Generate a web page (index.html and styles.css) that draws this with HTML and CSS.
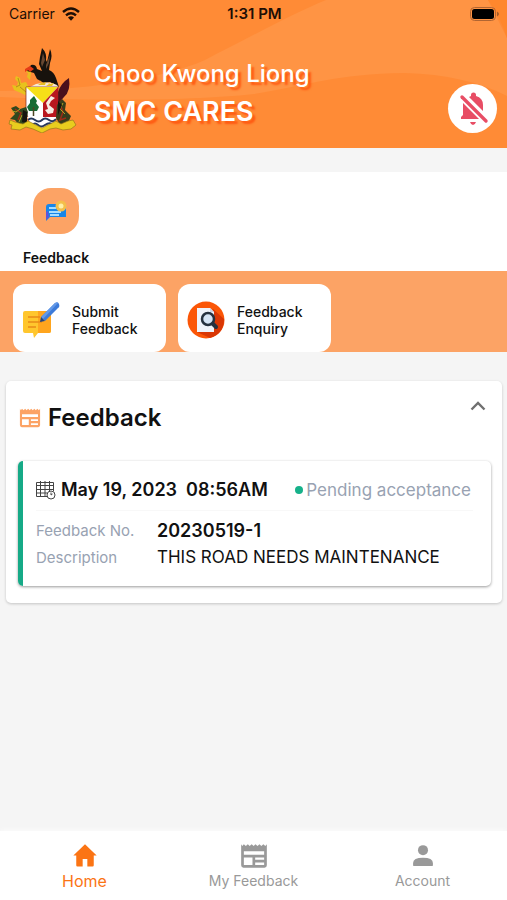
FILE: index.html
```html
<!DOCTYPE html>
<html lang="en">
<head>
<meta charset="utf-8">
<meta name="viewport" content="width=device-width, initial-scale=1">
<title>SMC Cares</title>
<link rel="stylesheet" href="styles.css">
</head>
<body>
<svg class="defs" width="0" height="0" aria-hidden="true">
  <symbol id="news" viewBox="0 0 24 24">
    <path fill="currentColor" fill-rule="evenodd" d="M1 2l1 1.500 1.300-1.500 1.700 1.500L6.700 2l1.600 1.500L10 2l1.700 1.500L13.300 2 15 3.500 16.700 2l1.600 1.500L20 2l1.700 1.500L23 2v18a2 2 0 0 1-2 2H3a2 2 0 0 1-2-2zM3.300 8v3h17.400V8zM3.300 13.300v6.400h7.400v-6.400zM13 13.300v2h7.700v-2zM13 17.600v2.100h7.700v-2.100z"/>
  </symbol>
</svg>
<header class="hero">
  <svg class="hero-art" viewBox="0 0 507 148" preserveAspectRatio="none" aria-hidden="true">
    <path fill="#ff9444" d="M326 0C290 15 250 37 205 60C160 80 80 91 0 91V97C90 101 190 101 254 94C310 85 335 74 405 73C445 74 480 82 507 96V38L488 0z"/>
    <path fill="#ff872d" d="M488 0h19v38Q500 16 488 0z"/>
  </svg>
  <div class="status">
    <span class="carrier">Carrier
      <svg width="18" height="14" viewBox="0 0 18 14" aria-hidden="true"><g fill="none" stroke="#1d0e05" stroke-width="2.400"><path d="M1 5Q9-2 17 5"/><path d="M4 8.300Q9 4 14 8.300"/></g><path fill="#1d0e05" d="M6 10.500Q9 8 12 10.500L9 13.800z"/></svg>
    </span>
    <span class="time">1:31 PM</span>
    <svg class="battery" width="30" height="14" viewBox="0 0 30 14" aria-hidden="true"><rect x=".5" y=".5" width="25" height="13" rx="4" fill="none" stroke="#b16532"/><rect x="2" y="2" width="22" height="10" rx="2.500"/><path fill="#a35b29" d="M27 4.500q4 2.500 0 5z"/></svg>
  </div>
  <div class="brand">
    <svg class="crest" width="70" height="86" viewBox="0 0 70 86" aria-hidden="true">
      <path fill="#4a101c" d="M61 31Q63 44 56 50L50 57V45Q53 36 61 31z"/>
      <path fill="#e8c21d" d="M8 29l4 2 1 5 5-1 2 4-1 10-6-3-7-3-2-5 5 1 1-4-3-3z"/>
      <path fill="none" stroke="#b78e18" d="M10 31l2 7-4 2M12 40l6 5"/>
      <path fill="#e8bd20" d="M20 22l3 3-1 8-3-3 1-4-2-1z"/>
      <path fill="#17120d" d="M23 18q5-1 6 4l5 2-3-7 1-7 2-9q5 5 4 12l1 2 3-13q3 6 0 14l-1 7q5 2 7 8l3 9-9-5-6 1-7-4-3-6-7-2z"/>
      <path fill="#684831" d="M35 6l2 7-3 7-1-4zM42 8l-1 8-3 6v-4z"/>
      <path fill="#e43b17" d="M17 22l5-3 4 3-4 3-2-2-3 2z"/>
      <path fill="#f5e9d3" d="M22 40l6-3q15-4 22 2v5l-11 1-12-2z"/>
      <path fill="#e8bd20" d="M32 33l2 3 4-1-1 3h-7l3-2zM40 35l2 2 4-1-2 3h-6l3-2z"/>
      <path fill="#fff" stroke="#7c271f" stroke-width=".7" d="M18 40h32v25q-3 13-16 16-13-3-16-16z"/>
      <path fill="#f6df18" d="M18 40h32L35 56z"/>
      <path fill="#b9171f" d="M50 40v25q-2 8-8 12l-7-3V56z"/>
      <path fill="#166b35" d="M26 49l3 5-1 2 3 4-2 4h-8l-2-4 3-4v-3z"/><path stroke="#4c4623" stroke-width="1.500" d="M25.500 60v9"/>
      <path fill="#f7eee5" d="M43 49l4 2-4 3-2 4 5 4-1 4-5 1-3-4 3-1-2-6z"/>
      <path fill="#fff" d="M19 70h30q-4 10-15 12-11-2-15-12z"/>
      <path fill="none" stroke="#25375c" stroke-width="2" d="M20 73q3-3 7 0t7 0 7 0 7-1M24 78q3-3 6 0t7 0 7-1"/>
      <path fill="#30481e" d="M3 61l5-2 4 3 6-2 2 5-2 12-7 1-4-5-5-1 5-5z"/>
      <path fill="#363d1b" d="M49 58l5-6 4 4-1 7 6 6-3 7-7 3-5-8z"/>
      <path fill="none" stroke="#9b2c18" stroke-width="1.500" d="M7 62l6 4-3 7M52 57l3 8-3 8 6-2"/>
      <path fill="none" stroke="#b5a324" d="M4 64l4 1 4-3M14 68l-3 7M55 56l-3 6 5 5"/>
      <path fill="#15150f" d="M15 63l4 2v11l-5-1zM50 54l4 4-4 10z"/>
      <path fill="#e8cd1e" stroke="#98791b" stroke-width=".7" d="M2 73l5 2 8 2 5-3 6 3 8 4 8-4 6-3 5 3 7-3 5-1 3 5-5 4-8 1-7-2-6 1-8 4-9-4-7-2-6 3-9-1 1-4-3-1z"/>
    </svg>
    <div class="who"><p>Choo Kwong Liong</p><h1>SMC CARES</h1></div>
    <button class="bell" type="button" aria-label="Notifications off">
      <svg width="32" height="36" viewBox="0 0 32 36" aria-hidden="true"><path fill="#e84d65" d="M12 6l2-1V4a2.500 2.500 0 0 1 5 0v1q7 2 7 9v6zM6 12l16 16H4v-2l2-2zM13 31h6q-1 3-3 3t-3-3z"/><path stroke="#fff" stroke-width="2" d="M7 4l23 23"/><path stroke="#e84d65" stroke-width="3.400" stroke-linecap="round" d="M5 6l24 24"/></svg>
    </button>
  </div>
</header>
<main>
  <nav class="services" aria-label="Services">
    <a class="service" href="#feedback">
      <span class="tile"><svg width="23" height="22" viewBox="0 0 23 22" aria-hidden="true"><path fill="#1786e9" d="M4 4h13q4 0 4 3v10H5L1 21V7q0-3 3-3z"/><path fill="#6254d8" d="M1 12v8l3-3-1-6z"/><path stroke="#a5ddff" stroke-width="2" d="M4 8h7M4 12h12M5 15h9"/><circle cx="16" cy="6" r="5.500" fill="#f4bf4a"/><circle cx="16" cy="6" r="2.500" fill="#fff0a8"/></svg></span>
      <span>Feedback</span>
    </a>
  </nav>
  <div class="actions">
    <a class="action" href="#submit">
      <svg width="38" height="38" viewBox="0 0 38 38" aria-hidden="true"><path fill="#ffc62d" d="M3 10h24q2 0 2 2v18q0 2-2 2H16l-4 5-1-5H3q-2 0-2-2V12q0-2 2-2z"/><path fill="#ffa51e" d="M16 10h11q2 0 2 2v18q0 2-2 2H16z"/><path stroke="#e98a17" stroke-width="1.500" d="M6 16h12M6 21h14M6 26h8"/><path fill="#3d7bd9" d="M19 16L33 2q3-2 4 1t-1 4L23 20z"/><path fill="#6399e8" d="M19 16L33 2q2-1 3 0L21 18z"/><path fill="#24457f" d="M19 16l4 4-5 1z"/></svg>
      <span>Submit<br>Feedback</span>
    </a>
    <a class="action" href="#enquiry">
      <svg width="38" height="38" viewBox="0 0 38 38" aria-hidden="true"><circle cx="19" cy="19" r="18.500" fill="#fb5607"/><path fill="#d93705" d="M26 8l11 10q0 15-14 19L10 31z"/><path fill="#eef3fa" d="M10 7h13l4 4v20H10z"/><path fill="#cbd5e3" d="M23 7v4h4z"/><circle cx="21" cy="18" r="6" fill="#d4e4f5" stroke="#24313f" stroke-width="2.500"/><path stroke="#24313f" stroke-width="4" stroke-linecap="round" d="M26 23l3 3"/></svg>
      <span>Feedback<br>Enquiry</span>
    </a>
  </div>
  <section class="panel" id="feedback">
    <div class="panel-head">
      <svg class="orange" width="22" height="22" aria-hidden="true"><use href="#news"/></svg>
      <h2>Feedback</h2>
      <button class="collapse" type="button" aria-label="Collapse feedback"><svg width="16" height="10" viewBox="0 0 16 10" aria-hidden="true"><path fill="none" stroke="#707070" stroke-width="2.400" d="M1.500 8.500L8 2l6.500 6.500"/></svg></button>
    </div>
    <article class="ticket">
      <div class="ticket-head">
        <svg width="20" height="20" viewBox="0 0 20 20" aria-hidden="true"><path fill="none" stroke="#444" d="M.5 2.500h17V11M.5 2.500v14H11M.5 5.500h17M.5 9.500h17M.5 13H11M4.500 1v15.500M9 1v15.500M13.500 1v10"/><circle cx="15" cy="15" r="4" fill="#fff" stroke="#444"/><path fill="none" stroke="#444" d="M15 12.500V15l1.500-1"/></svg>
        <time datetime="2023-05-19T08:56">May 19, 2023&nbsp; 08:56AM</time>
        <span class="state">Pending acceptance</span>
      </div>
      <dl>
        <dt>Feedback No.</dt><dd class="strong">20230519-1</dd>
        <dt>Description</dt><dd>THIS ROAD NEEDS MAINTENANCE</dd>
      </dl>
    </article>
  </section>
</main>
<nav class="tabs" aria-label="Main">
  <a class="tab active" href="#home"><svg width="28" height="28" viewBox="0 0 24 24" aria-hidden="true"><path fill="currentColor" d="M12 2L2 11.500h2.500V20q0 1 1 1H10v-6.500h4V21h4.500q1 0 1-1v-8.500H22z"/></svg>Home</a>
  <a class="tab" href="#mine"><svg width="28" height="28" viewBox="0 0 24 24" aria-hidden="true"><use href="#news"/></svg>My Feedback</a>
  <a class="tab" href="#account"><svg width="28" height="28" viewBox="0 0 24 24" aria-hidden="true"><circle cx="12" cy="7" r="4.300" fill="currentColor"/><path fill="currentColor" d="M3.500 20v-2q0-4.500 8.500-4.500t8.500 4.500v2q0 .500-.500.500H4q-.500 0-.500-.500z"/></svg>Account</a>
</nav>
</body>
</html>
```

FILE: styles.css
```css
* { box-sizing: border-box; margin: 0; }
body {
  min-height: 100vh;
  display: flex;
  flex-direction: column;
  background: #f5f5f5;
  color: #111;
  font-family: Inter, "Liberation Sans", sans-serif;
}
a { color: inherit; text-decoration: none; }
button { border: 0; padding: 0; background: none; }
svg { flex: none; display: block; }
.defs { position: absolute; }

.hero { position: relative; background: #ff8b36; padding-bottom: 10px; }
.hero-art { position: absolute; inset: 0; width: 100%; height: 100%; }
.status {
  position: relative;
  display: grid;
  grid-template-columns: 1fr auto 1fr;
  align-items: center;
  height: 27px;
  padding: 0 7px 0 9px;
  font-size: 14px;
  color: #1d0e05;
}
.carrier { display: flex; align-items: center; gap: 7px; }
.time { font-size: 15px; font-weight: 600; }
.battery { justify-self: end; }
.brand {
  position: relative;
  display: flex;
  align-items: center;
  gap: 16px;
  height: 111px;
  padding: 15px 10px 0 8px;
}
.who {
  flex: 1;
  padding-top: 5px;
  color: #fff;
  text-shadow: 3px 3px 2px #ff5a12;
}
.who p { font-size: 24px; line-height: 38px; font-weight: 500; }
.who h1 { font-size: 27px; line-height: 38px; font-weight: 600; }
.bell {
  display: grid;
  place-items: center;
  width: 49px;
  height: 49px;
  border-radius: 50%;
  background: #fff;
  align-self: flex-end;
  margin-bottom: 5px;
}

main { flex: 1; }
.services { display: flex; margin-top: 24px; padding: 16px 23px 4px; background: #fff; }
.service {
  display: flex;
  flex-direction: column;
  align-items: center;
  gap: 15px;
  font-size: 14px;
  line-height: 18px;
  font-weight: 600;
}
.tile {
  display: grid;
  place-items: center;
  width: 46px;
  height: 46px;
  border-radius: 18px;
  background: #fca365;
}
.actions { display: flex; gap: 12px; padding: 13px 13px 0; background: #fca365; }
.action {
  display: flex;
  align-items: center;
  gap: 12px;
  width: 153px;
  height: 68px;
  padding: 4px 9px 0;
  border-radius: 12px;
  background: #fff;
  font-size: 14px;
  line-height: 17px;
  font-weight: 500;
}

.panel {
  margin: 29px 5px 24px 6px;
  padding: 14px 11px 17px 12px;
  border-radius: 5px;
  background: #fff;
  box-shadow: 0 1px 3px #0003;
}
.panel-head { display: flex; align-items: center; gap: 7px; height: 46px; padding: 0 5px 0 1px; }
.panel-head h2 { flex: 1; font-size: 24px; line-height: 32px; font-weight: 600; }
.orange { color: #fca365; }
.collapse { align-self: flex-start; padding: 6px 0; }
.ticket {
  margin-top: 20px;
  padding: 13px 18px 15px 13px;
  border-left: 5px solid #16aa87;
  border-radius: 5px;
  box-shadow: 0 1px 3px #0006;
}
.ticket-head {
  display: flex;
  align-items: center;
  gap: 5px;
  padding: 4px 2px 8px 0;
  border-bottom: 1px solid #f8f8f8;
}
.ticket-head time { flex: 1; font-size: 18px; line-height: 24px; font-weight: 600; white-space: nowrap; }
.state { display: flex; align-items: center; gap: 3px; font-size: 17px; line-height: 24px; color: #98a2b2; white-space: nowrap; }
.state::before { content: ""; width: 8px; height: 8px; border-radius: 50%; background: #16b18a; }
dl { display: grid; grid-template-columns: 121px 1fr; padding-top: 6px; line-height: 27px; }
dt { font-size: 15px; color: #98a2b2; }
dd { font-size: 17px; }
.strong { font-size: 18px; font-weight: 600; }

.tabs {
  display: grid;
  grid-template-columns: repeat(3, 1fr);
  height: 69px;
  background: #fff;
  box-shadow: 0 -1px 5px #ffffffb0;
}
.tab { display: flex; flex-direction: column; align-items: center; padding-top: 11px; font-size: 14px; line-height: 22px; color: #999; }
.active { font-size: 16px; color: #fb7414; }
```
